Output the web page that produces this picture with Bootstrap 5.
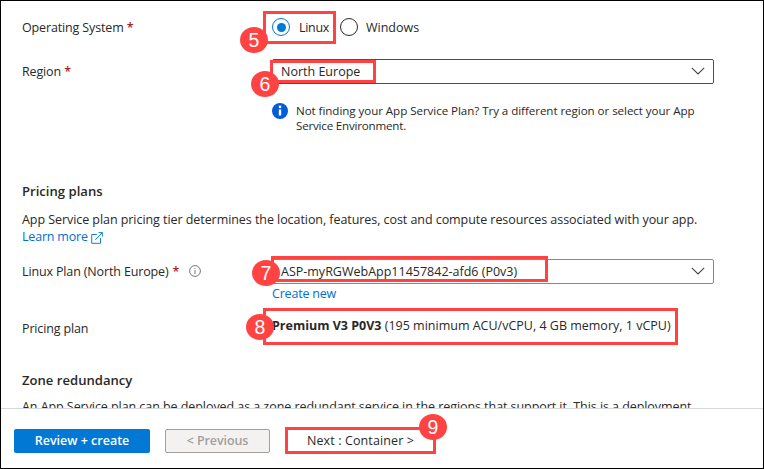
<!DOCTYPE html>
<html lang="en">
<head>
<meta charset="utf-8">
<title>Create Web App</title>
<link href="https://cdn.jsdelivr.net/npm/bootstrap@5.3.0/dist/css/bootstrap.min.css" rel="stylesheet">
<style>
body{font-family:"Open Sans","Noto Sans",sans-serif;font-size:12.5px;line-height:17px;letter-spacing:-.06px;color:#292827;background:#fff}
.frame{height:469px;border:1px solid #000;overflow:hidden}
.blade{height:407px;padding:14px 49px 0 21px}
.field{height:24px}
.caption{width:250px;flex:none;letter-spacing:-.14px}
.req{color:#a4262c;font-weight:600}
.picker{width:442px;height:25px;border:1px solid #8a8886;border-radius:2px;padding:0 8px;letter-spacing:0}
.picker.changed{border-color:#8a1fa8}
.dot{width:18px;height:18px;flex:none;border:1px solid #292827;border-radius:50%}
.dot.on{border-color:#0078d4}
.dot.on::after{content:"";width:9px;height:9px;border-radius:50%;background:#0078d4}
.radio-text{width:42px;padding-left:1px;letter-spacing:-.3px}
.azure{color:#0070d0;text-decoration:none}
.tight{letter-spacing:-.2px}
.wide{letter-spacing:0}
.title{font-weight:600;font-size:13.1px;letter-spacing:0}
.hint{font-size:11.6px;line-height:15px}
.callout{position:absolute;border:3px solid #ff4343}
.num{position:absolute;width:28px;height:26px;border-radius:50%;background:#ff4343;color:#fff;font:19.5px/26px "Liberation Sans",sans-serif;letter-spacing:0;text-align:center}
.c5{left:-9px;top:-7px;width:73px;height:33px}.n5{left:-32px;top:9px}
.c6{left:-2px;top:1px;width:106px;height:23px}.n6{left:-21px;top:12px}
.c7{left:-1px;top:-3px;width:277px;height:26px}.n7{left:-20px;top:1px}
.c8{left:-9px;top:-9px;width:415px;height:37px}.n8{left:-26px;top:-3px}
.c9{left:0;top:-2px;width:151px;height:27px}.n9{left:134px;top:-15px}
.foot{height:60px;border-top:1px solid #d8d8d8;padding:20px 0 0 13px}
.foot .btn{height:24px;padding:0;border-radius:2px;font-size:12.5px;line-height:22px;color:#292827;letter-spacing:0}
.foot .go{width:136px;background:#0078d4;color:#fff;font-weight:600}
.foot .back{width:105px;background:#f3f2f1;border-color:#a19f9d;color:#a19f9d;opacity:1;font-weight:600;letter-spacing:-.1px}
.foot .next{width:151px;letter-spacing:.12px}
.gap15{margin-left:15px}.gap10{margin-left:10px}
.t1{margin-top:20px}.t2{margin-top:20px}.t3{margin-top:50px}.t4{margin-top:11px}.t5{margin-top:14px}.t6{margin-top:2px}.t7{margin-top:15px}.t8{margin-top:35px}.t9{margin-top:9px}
.lower{padding-top:3px}
</style>
</head>
<body>
<div class="frame">
<main class="blade overflow-hidden">
  <div class="field d-flex align-items-center">
    <div class="caption">Operating System <span class="req">*</span></div>
    <div class="position-relative d-flex align-items-center">
      <span class="dot on d-flex align-items-center justify-content-center me-2"></span><span class="radio-text">Linux</span>
      <span class="dot me-2"></span><span class="wide">Windows</span>
      <div class="callout c5"></div><div class="num n5">5</div>
    </div>
  </div>
  <div class="field d-flex align-items-center t1">
    <div class="caption">Region <span class="req">*</span></div>
    <div class="position-relative">
      <div class="picker changed d-flex align-items-center justify-content-between"><span>North Europe</span>
        <svg width="14" height="8" viewBox="0 0 14 8" fill="none" stroke="#444" stroke-width="1.1"><path d="M.8.8 7 7 13.2.8"/></svg></div>
      <div class="callout c6"></div><div class="num n6">6</div>
    </div>
  </div>
  <div class="d-flex t2 hint">
    <div class="caption"></div>
    <svg class="flex-shrink-0 me-2" width="16" height="16" viewBox="0 0 16 16"><circle cx="8" cy="8" r="8" fill="#015cda"/><circle cx="8" cy="3.9" r="1.3" fill="#fff"/><path d="M6.8 6.5h2.4v6H6.8z" fill="#fff"/></svg>
    <div class="text-nowrap">Not finding your App Service Plan? Try a different region or select your App<br><span class="tight">Service Environment.</span></div>
  </div>
  <div class="title t3">Pricing plans</div>
  <div class="t4 text-nowrap">App Service plan pricing tier determines the location, features, cost and compute resources associated with your app.<br><a class="azure" href="#"><span class="tight">Learn more</span> <svg width="12" height="12" viewBox="0 0 12 12" fill="none" stroke="currentColor" stroke-width=".9"><path d="M6 2.5H.7v8.8h8.8V6M7.5.6h3.9v3.9M11.2.8 4.3 7.7"/></svg></a></div>
  <div class="field d-flex align-items-center t5">
    <div class="caption d-flex align-items-center">Linux Plan (North Europe)<span class="req ms-1">*</span>
      <svg class="gap10" width="12" height="12" viewBox="0 0 12 12" fill="none" stroke="#666" stroke-width=".9"><circle cx="6" cy="6" r="5.4"/><path d="M6 5v4M6 3v1"/></svg></div>
    <div class="position-relative">
      <div class="picker d-flex align-items-center justify-content-between"><span>ASP-myRGWebApp11457842-afd6 (P0v3)</span>
        <svg width="14" height="8" viewBox="0 0 14 8" fill="none" stroke="#444" stroke-width="1.1"><path d="M.8.8 7 7 13.2.8"/></svg></div>
      <div class="callout c7"></div><div class="num n7">7</div>
    </div>
  </div>
  <div class="d-flex t6"><div class="caption"></div><a class="azure tight" href="#">Create new</a></div>
  <div class="d-flex t7">
    <div class="caption lower">Pricing plan</div>
    <div class="position-relative text-nowrap"><b class="wide">Premium V3 P0V3</b> <span class="wide">(195 minimum ACU/vCPU, 4 GB memory, 1 vCPU)</span>
      <div class="callout c8"></div><div class="num n8">8</div></div>
  </div>
  <div class="title t8">Zone redundancy</div>
  <div class="t9 text-nowrap">An App Service plan can be deployed as a zone redundant service in the regions that support it. This is a deployment</div>
</main>
<footer class="foot d-flex align-items-start">
  <button class="btn go">Review + create</button>
  <button class="btn back gap15" disabled>&lt; Previous</button>
  <div class="position-relative gap15"><button class="btn next">Next : Container &gt;</button>
    <div class="callout c9"></div><div class="num n9">9</div></div>
</footer>
</div>
<script src="https://cdn.jsdelivr.net/npm/bootstrap@5.3.0/dist/js/bootstrap.bundle.min.js"></script>
</body>
</html>
